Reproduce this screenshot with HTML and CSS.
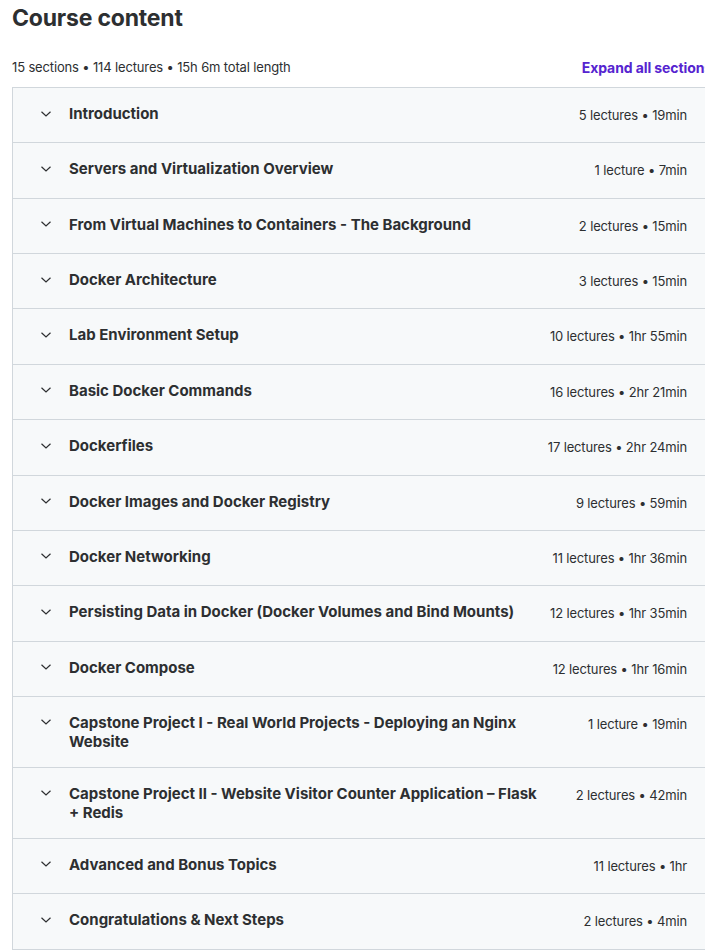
FILE: index.html
```html
<!DOCTYPE html>
<html lang="en">
<head>
<meta charset="utf-8">
<title>Course content</title>
<link rel="stylesheet" href="styles.css">
</head>
<body>
<div class="page">
  <h2 class="heading">Course content</h2>
  <div class="meta">
    <span class="summary">15 sections • 114 lectures • 15h 6m total length</span>
    <button class="expand">Expand all sections</button>
  </div>
  <div class="sections">
    <div class="row"><span class="chev"><svg viewBox="0 0 12 12" width="12" height="12"><path d="M1.5 3.8 L6 8 L10.5 3.8" fill="none" stroke="currentColor" stroke-width="1.2"/></svg></span><span class="title">Introduction</span><span class="stats">5 lectures • 19min</span></div>
    <div class="row"><span class="chev"><svg viewBox="0 0 12 12" width="12" height="12"><path d="M1.5 3.8 L6 8 L10.5 3.8" fill="none" stroke="currentColor" stroke-width="1.2"/></svg></span><span class="title">Servers and Virtualization Overview</span><span class="stats">1 lecture • 7min</span></div>
    <div class="row"><span class="chev"><svg viewBox="0 0 12 12" width="12" height="12"><path d="M1.5 3.8 L6 8 L10.5 3.8" fill="none" stroke="currentColor" stroke-width="1.2"/></svg></span><span class="title">From Virtual Machines to Containers - The Background</span><span class="stats">2 lectures • 15min</span></div>
    <div class="row"><span class="chev"><svg viewBox="0 0 12 12" width="12" height="12"><path d="M1.5 3.8 L6 8 L10.5 3.8" fill="none" stroke="currentColor" stroke-width="1.2"/></svg></span><span class="title">Docker Architecture</span><span class="stats">3 lectures • 15min</span></div>
    <div class="row"><span class="chev"><svg viewBox="0 0 12 12" width="12" height="12"><path d="M1.5 3.8 L6 8 L10.5 3.8" fill="none" stroke="currentColor" stroke-width="1.2"/></svg></span><span class="title">Lab Environment Setup</span><span class="stats">10 lectures • 1hr 55min</span></div>
    <div class="row"><span class="chev"><svg viewBox="0 0 12 12" width="12" height="12"><path d="M1.5 3.8 L6 8 L10.5 3.8" fill="none" stroke="currentColor" stroke-width="1.2"/></svg></span><span class="title">Basic Docker Commands</span><span class="stats">16 lectures • 2hr 21min</span></div>
    <div class="row"><span class="chev"><svg viewBox="0 0 12 12" width="12" height="12"><path d="M1.5 3.8 L6 8 L10.5 3.8" fill="none" stroke="currentColor" stroke-width="1.2"/></svg></span><span class="title">Dockerfiles</span><span class="stats">17 lectures • 2hr 24min</span></div>
    <div class="row"><span class="chev"><svg viewBox="0 0 12 12" width="12" height="12"><path d="M1.5 3.8 L6 8 L10.5 3.8" fill="none" stroke="currentColor" stroke-width="1.2"/></svg></span><span class="title">Docker Images and Docker Registry</span><span class="stats">9 lectures • 59min</span></div>
    <div class="row"><span class="chev"><svg viewBox="0 0 12 12" width="12" height="12"><path d="M1.5 3.8 L6 8 L10.5 3.8" fill="none" stroke="currentColor" stroke-width="1.2"/></svg></span><span class="title">Docker Networking</span><span class="stats">11 lectures • 1hr 36min</span></div>
    <div class="row"><span class="chev"><svg viewBox="0 0 12 12" width="12" height="12"><path d="M1.5 3.8 L6 8 L10.5 3.8" fill="none" stroke="currentColor" stroke-width="1.2"/></svg></span><span class="title">Persisting Data in Docker (Docker Volumes and Bind Mounts)</span><span class="stats">12 lectures • 1hr 35min</span></div>
    <div class="row"><span class="chev"><svg viewBox="0 0 12 12" width="12" height="12"><path d="M1.5 3.8 L6 8 L10.5 3.8" fill="none" stroke="currentColor" stroke-width="1.2"/></svg></span><span class="title">Docker Compose</span><span class="stats">12 lectures • 1hr 16min</span></div>
    <div class="row"><span class="chev"><svg viewBox="0 0 12 12" width="12" height="12"><path d="M1.5 3.8 L6 8 L10.5 3.8" fill="none" stroke="currentColor" stroke-width="1.2"/></svg></span><span class="title">Capstone Project I - Real World Projects - Deploying an Nginx Website</span><span class="stats">1 lecture • 19min</span></div>
    <div class="row"><span class="chev"><svg viewBox="0 0 12 12" width="12" height="12"><path d="M1.5 3.8 L6 8 L10.5 3.8" fill="none" stroke="currentColor" stroke-width="1.2"/></svg></span><span class="title">Capstone Project II - Website Visitor Counter Application – Flask + Redis</span><span class="stats">2 lectures • 42min</span></div>
    <div class="row"><span class="chev"><svg viewBox="0 0 12 12" width="12" height="12"><path d="M1.5 3.8 L6 8 L10.5 3.8" fill="none" stroke="currentColor" stroke-width="1.2"/></svg></span><span class="title">Advanced and Bonus Topics</span><span class="stats">11 lectures • 1hr</span></div>
    <div class="row"><span class="chev"><svg viewBox="0 0 12 12" width="12" height="12"><path d="M1.5 3.8 L6 8 L10.5 3.8" fill="none" stroke="currentColor" stroke-width="1.2"/></svg></span><span class="title">Congratulations &amp; Next Steps</span><span class="stats">2 lectures • 4min</span></div>
  </div>
</div>
</body>
</html>
```
FILE: styles.css
```css
html, body {
  margin: 0;
  padding: 0;
  background: #ffffff;
  overflow: hidden;
}
body {
  font-family: Inter, "Noto Sans", "Liberation Sans", sans-serif;
  color: #2d2f31;
}
.page {
  width: 700px;
  padding: 3px 0 0 12px;
}
.heading {
  margin: 0;
  font-size: 23px;
  line-height: 30px;
  font-weight: 700;
  letter-spacing: -0.2px;
}
.meta {
  display: flex;
  justify-content: space-between;
  align-items: center;
  margin-top: 22px;
  height: 24px;
}
.summary {
  font-size: 13px;
  line-height: 24px;
  letter-spacing: -0.15px;
}
.expand {
  border: 0;
  background: none;
  padding: 0;
  font-family: inherit;
  font-size: 14px;
  font-weight: 700;
  letter-spacing: -0.1px;
  color: #5624d0;
  white-space: nowrap;
}
.sections {
  margin-top: 8px;
  border: 1px solid #d1d7dc;
  border-bottom: 0;
}
.row {
  display: flex;
  align-items: flex-start;
  background: #f7f9fa;
  border-bottom: 1px solid #d1d7dc;
  padding: 16px 24px 16px 27px;
}
.chev {
  flex: none;
  width: 12px;
  height: 19px;
  display: flex;
  align-items: center;
  margin-right: 17px;
  color: #2d2f31;
}
.title {
  flex: 1;
  font-size: 15px;
  font-weight: 700;
  line-height: 19px;
  padding-right: 28px;
}
.stats {
  flex: none;
  font-size: 13px;
  line-height: 22.36px;
  letter-spacing: -0.15px;
  white-space: nowrap;
}
```
